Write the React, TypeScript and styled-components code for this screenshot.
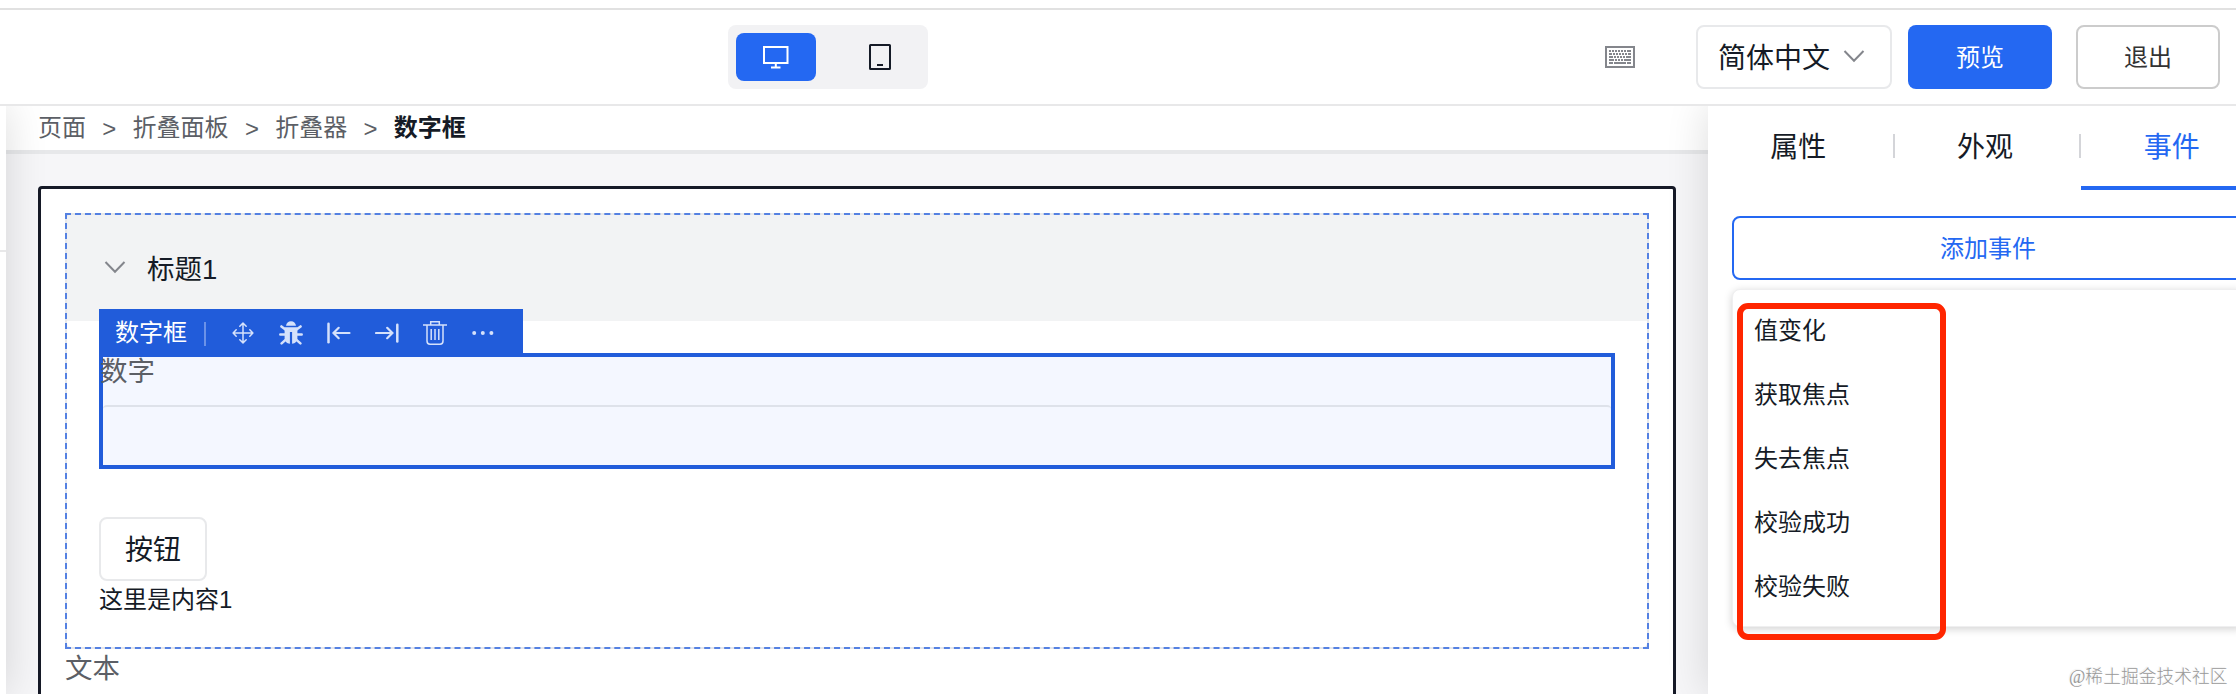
import React from "react";
import styled, { createGlobalStyle, css } from "styled-components";

const colors = {
  primary: "#2468f2",
  select: "#215cda",
  text: "#151b26",
  muted: "#5c5f66",
  icon: "#84868c",
  line: "#e8e9eb",
};

const GlobalStyle = createGlobalStyle`
  * { box-sizing: border-box; }
  body {
    margin: 0;
    overflow: hidden;
    background: #fff;
    color: ${colors.text};
    font-family: "Liberation Sans", "Noto Sans CJK SC", sans-serif;
    font-size: 24px;
    font-weight: 400;
  }
  button { font: inherit; color: inherit; margin: 0; padding: 0; }
  svg { display: block; flex: none; }
`;

const Page = styled.div`
  display: flex;
  flex-direction: column;
  width: 2236px;
  height: 694px;
  padding-top: 8px;
  overflow: hidden;
  background: #fff;
`;

const Header = styled.header`
  display: grid;
  grid-template-columns: 728px 1fr auto;
  align-items: center;
  flex: none;
  height: 98px;
  padding-right: 16px;
  border-top: 2px solid #e1e1e1;
  border-bottom: 2px solid #e8e8e9;
`;

const DeviceSwitch = styled.div`
  grid-column: 2;
  display: flex;
  gap: 24px;
  width: 200px;
  height: 64px;
  padding: 8px;
  border-radius: 8px;
  background: #f2f2f4;
`;

const DeviceButton = styled.button<{ $active?: boolean }>`
  display: flex;
  align-items: center;
  justify-content: center;
  width: 80px;
  height: 48px;
  border: 0;
  border-radius: 8px;
  background: ${(p) => (p.$active ? colors.primary : "transparent")};
  color: ${(p) => (p.$active ? "#fff" : colors.text)};
`;

const HeaderActions = styled.div`
  display: flex;
  align-items: center;
`;

const LanguageSelect = styled.button`
  display: flex;
  align-items: center;
  justify-content: space-between;
  width: 196px;
  height: 64px;
  margin: 0 16px 0 61px;
  padding: 0 25px 2px 20px;
  border: 2px solid ${colors.line};
  border-radius: 8px;
  background: #fff;
  font-size: 28px;
`;

const ActionButton = styled.button<{ $primary?: boolean }>`
  width: 144px;
  height: 64px;
  padding-bottom: 3px;
  border-radius: 8px;
  ${(p) =>
    p.$primary
      ? css`
          margin-right: 24px;
          border: 0;
          background: ${colors.primary};
          color: #fff;
        `
      : css`
          border: 2px solid #ccc;
          background: #fff;
          color: #333;
        `}
`;

const Body = styled.div`
  display: flex;
  flex: 1;
  min-height: 0;
  overflow: hidden;
`;

const LeftPanel = styled.aside`
  z-index: 2;
  flex: none;
  width: 306px;
  margin-left: -300px;
  background: #fff;
  box-shadow: 0 0 40px rgba(0, 0, 0, 0.14);
`;

const LeftSection = styled.div`
  height: 146px;
  border-bottom: 2px solid #e8e8e9;
`;

const Stage = styled.main`
  display: flex;
  flex-direction: column;
  flex: none;
  width: 1702px;
  background: #f6f6f8;
`;

const Breadcrumb = styled.nav`
  display: flex;
  flex: none;
  height: 48px;
  padding-left: 32px;
  border-bottom: 4px solid #e7e8ea;
  background: #fff;
  line-height: 44px;
`;

const Crumb = styled.span<{ $current?: boolean }>`
  color: ${(p) => (p.$current ? colors.text : colors.muted)};
  font-weight: ${(p) => (p.$current ? 600 : 400)};
`;

const CrumbArrow = styled.span`
  width: 46.6px;
  padding-top: 1px;
  text-align: center;
  color: ${colors.muted};
`;

const Canvas = styled.section`
  display: flex;
  flex-direction: column;
  width: 1638px;
  height: 620px;
  margin: 32px 0 0 32px;
  padding: 24px;
  border: 3px solid #161a27;
  border-radius: 4px;
  background: #fff;
`;

const CollapseOutline = styled.div`
  position: relative;
  flex: none;
  height: 436px;
  border: 2px solid #e7e8ea;
  border-radius: 6px;

  &::after {
    content: "";
    position: absolute;
    inset: -2px;
    border: 2px dashed #5581e2;
    pointer-events: none;
  }
`;

const CollapseHeader = styled.div`
  display: flex;
  align-items: center;
  gap: 21px;
  height: 106px;
  padding: 0 0 2px 37px;
  border-radius: 4px 4px 0 0;
  background: #f2f3f4;
  font-size: 27.5px;
`;

const CollapseContent = styled.div`
  padding: 32px 32px 0;
`;

const SelectedField = styled.div`
  position: relative;
  height: 116px;
  border: 4px solid ${colors.select};
  background: #f4f7ff;
`;

const FieldLabel = styled.div`
  height: 48px;
  margin-left: -3px;
  color: ${colors.muted};
  font-size: 27.5px;
  line-height: 30px;
`;

const FieldInput = styled.div`
  height: 60px;
  border-top: 2px solid #dee2ea;
  border-radius: 4px 4px 0 0;
`;

const FieldToolbar = styled.div`
  position: absolute;
  left: -4px;
  bottom: 112px;
  display: flex;
  align-items: center;
  width: 424px;
  height: 44px;
  padding: 4px 0 0 16px;
  background: ${colors.select};
  color: #d5e1fb;
`;

const ToolbarName = styled.span`
  color: #fff;
  line-height: 40px;
`;

const ToolbarDivider = styled.span`
  width: 2px;
  height: 24px;
  margin: 2px 13px 0 17px;
  background: #6b92e8;
`;

const ToolButton = styled.button`
  display: flex;
  align-items: center;
  justify-content: center;
  width: 48px;
  height: 40px;
  border: 0;
  background: transparent;
`;

const DemoButton = styled.button`
  display: block;
  width: 108px;
  height: 64px;
  margin-top: 48px;
  padding-bottom: 2px;
  border: 2px solid ${colors.line};
  border-radius: 8px;
  background: #fff;
  font-size: 28px;
`;

const ContentText = styled.p`
  margin: 0;
  line-height: 38px;
`;

const FormLabel = styled.div`
  color: ${colors.muted};
  font-size: 27.5px;
  line-height: 39px;
`;

const RightPanel = styled.aside`
  z-index: 2;
  flex: none;
  width: 560px;
  background: #fff;
  box-shadow: 0 0 40px rgba(0, 0, 0, 0.14);
`;

const Tabs = styled.div`
  display: grid;
  grid-template-columns: repeat(3, 1fr);
  height: 84px;
`;

const Tab = styled.div<{ $active?: boolean }>`
  display: flex;
  align-items: center;
  justify-content: center;
  padding: 0 6px 2px 0;
  border-bottom: 4px solid ${(p) => (p.$active ? colors.primary : "transparent")};
  color: ${(p) => (p.$active ? colors.primary : colors.text)};
  font-size: 28px;
  background: linear-gradient(#d4d5d9, #d4d5d9) right 0 top 28px / 2px 24px no-repeat;
`;

const PanelBody = styled.div`
  position: relative;
  padding: 26px 24px 0;
`;

const AddEventButton = styled.button`
  display: block;
  width: 512px;
  height: 64px;
  padding-bottom: 3px;
  border: 2px solid ${colors.primary};
  border-radius: 8px;
  background: #fff;
  color: ${colors.primary};
`;

const EventMenu = styled.ul`
  height: 338px;
  margin: 9px 0 0;
  padding: 9px 0 0 21px;
  border-radius: 8px;
  list-style: none;
  background: #fff;
  border: 1px solid #efeff0;
  box-shadow: 0 2px 8px rgba(0, 0, 0, 0.18);
`;

const EventItem = styled.li`
  height: 64px;
  line-height: 64px;
`;

const Highlight = styled.div`
  position: absolute;
  left: 29px;
  top: 113px;
  width: 209px;
  height: 337px;
  border: 6px solid #ff2600;
  border-radius: 11px;
`;

const Watermark = styled.div`
  position: absolute;
  left: 361px;
  top: 474px;
  color: #999;
  font-family: "Liberation Serif", "Noto Sans CJK SC", serif;
  font-size: 17.8px;
  font-weight: 300;
  line-height: 26px;
  white-space: nowrap;
  text-shadow: -1px -1px 1px #eee;
`;

const ChevronDown = () => (
  <svg width="22" height="14" viewBox="0 0 22 14" fill="none" stroke={colors.icon} strokeWidth="2">
    <path d="M1.5 2 11 11.7 20.5 2" />
  </svg>
);

const MonitorIcon = () => (
  <svg width="26" height="24" viewBox="0 0 26 24" fill="none" stroke="currentColor" strokeWidth="2">
    <path d="M1 2h23.5v16H1zM12.8 18v5M8 22.5h9.5" />
  </svg>
);

const TabletIcon = () => (
  <svg width="22" height="26" viewBox="0 0 22 26" fill="none" stroke="currentColor" strokeWidth="2">
    <rect x="1" y="1" width="20" height="24" rx=".5" />
    <path d="M8 21h6" />
  </svg>
);

const keyboardRows = [
  "M4 5h2m1 0h2m1 0h2m1 0h2m1 0h2m1 0h2m1 0h4",
  "M4 8h3m1 0h2m1 0h2m1 0h2m1 0h2m1 0h2m1 0h3",
  "M4 11h4m1 0h2m1 0h2m1 0h2m1 0h2m1 0h5",
  "M4 14h5m1 0h2m1 0h2m1 0h2m1 0h7",
  "M4 17h4m1 0h12m1 0h4",
];

const KeyboardIcon = () => (
  <svg width="30" height="22" viewBox="0 0 30 22" fill="none" stroke={colors.icon} strokeWidth="2">
    <path d="M1 1h28v20H1z" />
    {keyboardRows.map((d) => (
      <path key={d} d={d} />
    ))}
  </svg>
);

const MoveIcon = () => (
  <svg width="22" height="22" viewBox="0 0 22 22" fill="none" stroke="currentColor" strokeWidth="1.5" strokeLinecap="round" strokeLinejoin="round">
    <path d="M11 1.3v19.4M1.3 11h19.4M7.8 4.2 11 1.1l3.2 3.1M7.8 17.8l3.2 3.1 3.2-3.1M4.2 7.8 1.1 11l3.1 3.2M17.8 7.8l3.1 3.2-3.1 3.2" />
  </svg>
);

const BugIcon = () => (
  <svg width="24" height="24" viewBox="0 0 24 24">
    <path d="M7 4.8C7.3 1.9 9.3.2 12 .2s4.7 1.7 5 4.6z" fill="currentColor" />
    <path d="M5.6 6.2h12.8V17c0 3.6-2.2 5.3-5.3 5.8V11.1h-2.2v11.7c-3.1-.5-5.3-2.2-5.3-5.8z" fill="currentColor" />
    <path
      d="M6.8 8.8 2.4 5.4M17.2 8.8l4.4-3.4M6 13.6H1.3M18 13.6h4.7M6.8 18.6l-4.2 3.8M17.2 18.6l4.2 3.8"
      fill="none"
      stroke="currentColor"
      strokeWidth="2.5"
      strokeLinecap="round"
    />
  </svg>
);

const ArrowToLeftIcon = () => (
  <svg width="24" height="22" viewBox="0 0 24 22" fill="none" stroke="currentColor" strokeWidth="2.2" strokeLinecap="round">
    <path strokeWidth="2.5" d="M1.5 1.8v18.4" />
    <path d="M6.5 11h16M11.7 5.8 6.5 11l5.2 5.2" />
  </svg>
);

const ArrowToRightIcon = () => (
  <svg width="24" height="22" viewBox="0 0 24 22" fill="none" stroke="currentColor" strokeWidth="2.2" strokeLinecap="round">
    <path strokeWidth="2.5" d="M22.3 2.8v16.6" />
    <path d="M1 11h16.4M12.2 5.8l5.2 5.2-5.2 5.2" />
  </svg>
);

const TrashIcon = () => (
  <svg width="24" height="24" viewBox="0 0 24 24" fill="none" stroke="currentColor" strokeWidth="1.5">
    <path d="M0 4h24M7.7 4V.8h8.6V4M4 4v16c0 2 1 3.2 3 3.2h10c2 0 3-1.2 3-3.2V4M8.2 8v11M12 8v11M15.8 8v11" />
  </svg>
);

const MoreIcon = () => (
  <svg width="22" height="6" viewBox="0 0 22 6" fill="currentColor">
    <circle cx="2.2" cy="3" r="2" />
    <circle cx="10.8" cy="3" r="2" />
    <circle cx="19.4" cy="3" r="2" />
  </svg>
);

const tools = [
  { label: "move", Icon: MoveIcon },
  { label: "debug", Icon: BugIcon },
  { label: "insert before", Icon: ArrowToLeftIcon },
  { label: "insert after", Icon: ArrowToRightIcon },
  { label: "delete", Icon: TrashIcon },
  { label: "more", Icon: MoreIcon },
];

const crumbs = ["页面", "折叠面板", "折叠器"];
const events = ["值变化", "获取焦点", "失去焦点", "校验成功", "校验失败"];

export default function App() {
  return (
    <>
      <GlobalStyle />
      <Page>
        <Header>
          <DeviceSwitch>
            <DeviceButton $active>
              <MonitorIcon />
            </DeviceButton>
            <DeviceButton>
              <TabletIcon />
            </DeviceButton>
          </DeviceSwitch>
          <HeaderActions>
            <KeyboardIcon />
            <LanguageSelect>
              简体中文
              <ChevronDown />
            </LanguageSelect>
            <ActionButton $primary>预览</ActionButton>
            <ActionButton>退出</ActionButton>
          </HeaderActions>
        </Header>
        <Body>
          <LeftPanel>
            <LeftSection />
          </LeftPanel>
          <Stage>
            <Breadcrumb>
              {crumbs.map((name) => (
                <React.Fragment key={name}>
                  <Crumb>{name}</Crumb>
                  <CrumbArrow>&gt;</CrumbArrow>
                </React.Fragment>
              ))}
              <Crumb $current>数字框</Crumb>
            </Breadcrumb>
            <Canvas>
              <CollapseOutline>
                <CollapseHeader>
                  <ChevronDown />
                  标题1
                </CollapseHeader>
                <CollapseContent>
                  <SelectedField>
                    <FieldToolbar>
                      <ToolbarName>数字框</ToolbarName>
                      <ToolbarDivider />
                      {tools.map(({ label, Icon }) => (
                        <ToolButton key={label}>
                          <Icon />
                        </ToolButton>
                      ))}
                    </FieldToolbar>
                    <FieldLabel>数字</FieldLabel>
                    <FieldInput />
                  </SelectedField>
                  <DemoButton>按钮</DemoButton>
                  <ContentText>这里是内容1</ContentText>
                </CollapseContent>
              </CollapseOutline>
              <FormLabel>文本</FormLabel>
            </Canvas>
          </Stage>
          <RightPanel>
            <Tabs>
              <Tab>属性</Tab>
              <Tab>外观</Tab>
              <Tab $active>事件</Tab>
            </Tabs>
            <PanelBody>
              <AddEventButton>添加事件</AddEventButton>
              <EventMenu>
                {events.map((name) => (
                  <EventItem key={name}>{name}</EventItem>
                ))}
              </EventMenu>
              <Highlight />
              <Watermark>@稀土掘金技术社区</Watermark>
            </PanelBody>
          </RightPanel>
        </Body>
      </Page>
    </>
  );
}
